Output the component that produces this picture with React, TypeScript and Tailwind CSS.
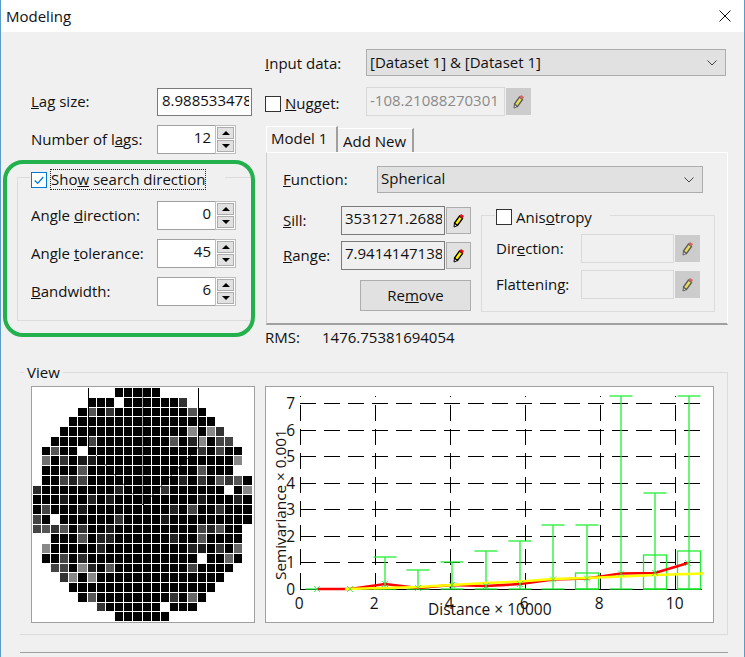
import { ReactNode } from 'react';

const font = 'font-["Open_Sans","Noto_Sans",sans-serif]';

// [first col, last col, overrides]
const wafer: [number, number, Record<number, string>][] = [
  [9, 13, {}],
  [6, 16, { 9: '#fff', 16: '#333' }],
  [5, 18, { 6: '#555', 8: '#333', 17: '#555' }],
  [4, 19, {}],
  [3, 20, { 17: '#888', 19: '#888', 20: '#333' }],
  [2, 21, { 6: '#444', 15: '#555', 17: '#222', 18: '#888', 20: '#444', 21: '#444' }],
  [1, 22, { 2: '#555', 5: '#fff', 18: '#333', 20: '#444' }],
  [1, 22, { 1: '#707070', 3: '#333', 5: '#1a1a1a', 6: '#1a1a1a', 22: '#888' }],
  [1, 21, { 5: '#555', 18: '#555' }],
  [1, 23, { 3: '#444', 4: '#222', 5: '#444', 16: '#222', 18: '#333', 20: '#555', 21: '#333', 22: '#555' }],
  [0, 23, { 0: '#2a2a2a', 9: '#222', 14: '#333', 21: '#fff', 23: '#888' }],
  [0, 23, { 3: '#1a1a1a', 6: '#222', 8: '#1a1a1a', 18: '#1a1a1a', 22: '#222' }],
  [0, 23, { 1: '#444', 5: '#1a1a1a', 15: '#222', 17: '#444', 20: '#333' }],
  [0, 23, { 0: '#444', 2: '#fff', 9: '#333', 14: '#1a1a1a' }],
  [0, 22, { 0: '#444', 1: '#555', 2: '#333', 3: '#555', 5: '#333', 8: '#1a1a1a', 18: '#444', 19: '#222', 20: '#555' }],
  [2, 22, { 5: '#555', 7: '#222', 8: '#222', 15: '#222', 18: '#555' }],
  [1, 22, { 1: '#888', 7: '#222', 17: '#222', 18: '#1a1a1a', 20: '#333', 22: '#666' }],
  [1, 22, { 3: '#444', 5: '#2a2a2a', 18: '#fff', 21: '#666' }],
  [2, 21, { 2: '#444', 3: '#444', 5: '#888', 6: '#222', 8: '#555', 17: '#444' }],
  [3, 20, { 3: '#333', 4: '#888', 6: '#888' }],
  [4, 19, {}],
  [5, 18, { 6: '#555', 15: '#333', 17: '#666' }],
  [7, 17, { 7: '#333', 14: '#fff' }],
  [9, 14, {}],
];

// x, top of whisker, top of box (if any)
const bins: [number, number, number?][] = [
  [317, 589], [350, 589], [385, 557], [418, 570], [452, 562], [486, 551],
  [520, 541], [553, 525], [587, 525, 573], [621, 396], [655, 493, 555], [689, 396, 551],
];

const redLine = '317,589 350,589 385,584 418,588 452,585 486,586 520,584 553,579.5 587,578.5 621,573.5 655,573 688,563';
const yellowLine = '345,589 385,588 418,587 452,585 486,583 520,581.5 553,579 587,578 621,576.5 655,575 704,573.5';

function Pencil({ off }: { off?: boolean }) {
  return (
    <svg viewBox="0 0 12 15" className={off ? 'w-[12px] h-[15px] opacity-55' : 'w-[12px] h-[15px]'}>
      <path d="M1 14 L1.5 10 L4.5 12.5 Z" fill="#fff" stroke="#000" strokeWidth="1" />
      <path d="M1.5 10 L6.5 3 L9.5 5.5 L4.5 12.5 Z" fill="#ffee00" stroke="#000" strokeWidth="1.3" />
      <path d="M6.5 3 L8 1 L11 3 L9.5 5.5 Z" fill="#e01010" />
    </svg>
  );
}

function PencilButton({ off }: { off?: boolean }) {
  return (
    <div className={off ? 'w-[25px] h-[27px] flex items-center justify-center bg-[#cccccc] border border-[#cccccc]' : 'w-[25px] h-[27px] flex items-center justify-center bg-[#e1e1e1] border border-[#adadad]'}>
      <Pencil off={off} />
    </div>
  );
}

function Check({ checked }: { checked?: boolean }) {
  return (
    <div className={checked ? 'w-4 h-4 shrink-0 bg-white border border-[#0078d7] flex items-center justify-center' : 'w-4 h-4 shrink-0 bg-white border border-[#333]'}>
      {checked && (
        <svg viewBox="0 0 14 14" className="w-3 h-3">
          <path d="M2 7.5 L5.5 11 L12 3.5" fill="none" stroke="#0078d7" strokeWidth="1.5" />
        </svg>
      )}
    </div>
  );
}

function Spin({ value }: { value: string }) {
  return (
    <div className="flex w-[79px] h-[29px]">
      <div className="w-[58px] bg-white border border-r-0 border-[#a0a0a0] text-right pr-[4px] leading-[23px]">{value}</div>
      <div className="w-[21px] flex flex-col gap-[1px] p-[1px] bg-white border border-[#bdbdbd]">
        <div className="flex-1 bg-[#e1e1e1] border border-[#adadad] flex items-center justify-center">
          <div className="w-0 h-0 border-x-[4px] border-x-transparent border-b-[4px] border-b-black" />
        </div>
        <div className="flex-1 bg-[#e1e1e1] border border-[#adadad] flex items-center justify-center">
          <div className="w-0 h-0 border-x-[4px] border-x-transparent border-t-[4px] border-t-black" />
        </div>
      </div>
    </div>
  );
}

function SpinRow({ label, value }: { label: ReactNode; value: string }) {
  return (
    <div className="flex items-center justify-between pl-[14px] w-[219px]">
      <span>{label}</span>
      <Spin value={value} />
    </div>
  );
}

function Select({ value, className }: { value: string; className: string }) {
  return (
    <div className={`h-[27px] bg-[#e1e1e1] border border-[#adadad] flex items-center justify-between pl-[3px] pr-[8px] ${className}`}>
      <span className="leading-none -mt-[2px]">{value}</span>
      <svg viewBox="0 0 10 6" className="w-[10px] h-[6px]">
        <path d="M0.5 0.5 L5 5 L9.5 0.5" fill="none" stroke="#444" strokeWidth="1" />
      </svg>
    </div>
  );
}

function Wafer() {
  return (
    <svg viewBox="0 0 222 235" className="w-[224px] h-[237px] bg-white border border-[#a0a0a0] shrink-0">
      <g shapeRendering="crispEdges">
        {wafer.map(([from, to, over], r) =>
          Array.from({ length: to - from + 1 }, (_, i) => from + i).map((c) => (
            <rect key={`${r}-${c}`} x={0.5 + c * 9.17} y={1 + r * 9.76} width={8.17} height={8.76} fill={over[c] ?? '#000'} />
          )),
        )}
      </g>
      <g fill="none" stroke="#000" strokeWidth="1">
        <path d="M56.5 1 V60" />
        <path d="M166.5 1 V60" />
      </g>
      <g fill="none" stroke="#000" strokeWidth="0.7">
        <path d="M56.5 60 L111 118 L166.5 60" />
        <path d="M111 1 V118" />
      </g>
    </svg>
  );
}

function Plot() {
  const ys = [403.7, 430.3, 456.3, 483.3, 509.5, 536, 562.5, 589.3];
  const xs = [300.3, 375.3, 450.3, 525.3, 600.3, 675.7];
  return (
    <svg viewBox="266 387 447 235" className="w-[449px] h-[237px] bg-white border border-[#a0a0a0] shrink-0">
      <g stroke="#000" strokeWidth="1" strokeDasharray="16 8" shapeRendering="crispEdges">
        {ys.slice(0, 7).map((y) => (
          <line key={y} x1="300" x2="702" y1={y} y2={y} />
        ))}
        <line x1="300" x2="702" y1="589.3" y2="589.3" strokeDasharray="none" />
        {xs.map((x) => (
          <line key={x} x1={x} x2={x} y1="589" y2="396" />
        ))}
      </g>
      <g stroke="#22ee33" strokeWidth="1.3" fill="none">
        {bins.map(([x, top, box]) => (
          <g key={x}>
            {top < 589 && <line x1={x - 11.5} x2={x + 11.5} y1={top} y2={top} />}
            {top < 589 && <line x1={x} x2={x} y1={top} y2={589} />}
            {box && <rect x={x - 11.5} y={box} width="23" height={589 - box} />}
            <line x1={x - 11.5} x2={x + 11.5} y1="589" y2="589" />
          </g>
        ))}
      </g>
      <polyline points={redLine} fill="none" stroke="#ff0000" strokeWidth="2.6" />
      <polyline points={yellowLine} fill="none" stroke="#ffff00" strokeWidth="2.4" />
      <g stroke="#33dd44" strokeWidth="0.8">
        {redLine.split(' ').map((p) => {
          const [x, y] = p.split(',').map(Number);
          return <path key={p} d={`M${x - 3} ${y - 3} L${x + 3} ${y + 3} M${x + 3} ${y - 3} L${x - 3} ${y + 3}`} />;
        })}
      </g>
      <g fontSize="15.5" fill="#111" fontFamily="'Open Sans','Noto Sans',sans-serif">
        {[7, 6, 5, 4, 3, 2, 1, 0].map((n, i) => (
          <text key={n} x="295" y={ys[i] + 5.5} textAnchor="end">{n}</text>
        ))}
        {[0, 2, 4, 6, 8, 10].map((n, i) => (
          <text key={n} x={xs[i] - 1} y="609" textAnchor="middle">{n}</text>
        ))}
        <text x="428" y="615">Distance × 10000</text>
        <text x="0" y="0" fontSize="15.3" transform="translate(286 580) rotate(-90)">Semivariance × 0.001</text>
      </g>
    </svg>
  );
}

export default function App() {
  return (
    <div className={`relative w-[745px] h-[657px] overflow-hidden bg-[#f0f0f0] border-x border-[#5b9bc8] text-[15px] text-[#111] ${font}`}>
      <div className="h-8 -mx-px bg-white flex items-center justify-between pl-[5px] pr-[14px]">
        <span className="pl-px">Modeling</span>
        <svg viewBox="0 0 12 12" className="w-3 h-3">
          <path d="M0.5 0.5 L11.5 11.5 M11.5 0.5 L0.5 11.5" stroke="#111" strokeWidth="1" />
        </svg>
      </div>

      <div className="flex h-[328px]">
        {/* left column */}
        <div className="ml-[16px] w-[248px] pt-[56px] flex flex-col">
          <div className="flex items-center justify-between pl-[14px] w-[235px]">
            <span className="-mt-[2px]"><u>L</u>ag size:</span>
            <div className="w-[95px] h-[28px] bg-white border border-[#7a7a7a] pl-[4px] pr-[2px]">
              <div className="overflow-hidden whitespace-nowrap leading-[23px]">8.98853347812</div>
            </div>
          </div>
          <div className="mt-[9px]">
            <SpinRow label={<>Number of l<u>a</u>gs:</>} value="12" />
          </div>
          <div className="mt-[23px] w-[234px] h-[144px] border border-[#dcdcdc] border-r-0 flex flex-col">
            <div className="-mt-[9px] ml-[12px] pl-px w-[195px] h-[21px] bg-[#f0f0f0] flex items-center gap-[3px]">
              <Check checked />
              <span className="border border-dotted border-[#222] leading-[19px] h-[21px] whitespace-nowrap">Sho<u>w</u> search direction</span>
            </div>
            <div className="mt-[11px] -ml-px flex flex-col gap-[9px]">
              <SpinRow label={<>Angle <u>d</u>irection:</>} value="0" />
              <SpinRow label={<>Angle <u>t</u>olerance:</>} value="45" />
              <SpinRow label={<><u>B</u>andwidth:</>} value="6" />
            </div>
          </div>
        </div>

        {/* right column */}
        <div className="w-[464px] pt-[17px] flex flex-col">
          <div className="flex items-center">
            <span className="w-[101px] pt-[2px]"><u>I</u>nput data:</span>
            <Select value="[Dataset 1] & [Dataset 1]" className="w-[360px] pt-px" />
          </div>
          <div className="mt-[11px] flex items-center h-[29px]">
            <div className="w-[101px] pt-[4px] flex items-center gap-[4px]">
              <Check />
              <span><u>N</u>ugget:</span>
            </div>
            <div className="w-[139px] h-[29px] border border-[#d9d9d9] bg-[#f0f0f0] text-[#8a8a8a] pl-[3px] overflow-hidden whitespace-nowrap leading-[24px]">-108.21088270301</div>
            <div className="ml-px"><PencilButton off /></div>
          </div>

          <div className="mt-[10px] flex items-end pl-px h-[26px]">
            <div className="w-[72px] h-[26px] bg-[#f0f0f0] border-t border-l border-white border-r-2 border-r-[#a0a0a0] pl-[4px] leading-[22px]">Model 1</div>
            <div className="w-[76px] h-[24px] border-t border-white border-r-2 border-r-[#a0a0a0] pl-[5px] leading-[24px]">Add New</div>
          </div>
          <div className="ml-px w-[462px] h-[173px] border border-white border-b-2 border-b-[#a0a0a0] border-l-[#d0d0d0] pt-[13px] pl-[16px]">
            <div className="flex items-center">
              <span className="w-[94px]"><u>F</u>unction:</span>
              <Select value="Spherical" className="w-[326px]" />
            </div>
            <div className="flex mt-[13px]">
              <div className="w-[188px] shrink-0 flex flex-col">
                <div className="flex items-center">
                  <span className="w-[58px]"><u>S</u>ill:</span>
                  <div className="w-[104px] h-[29px] border border-[#7a7a7a] pl-[3px] pr-[2px]">
                    <div className="overflow-hidden whitespace-nowrap leading-[23px]">3531271.26881</div>
                  </div>
                  <div className="ml-px"><PencilButton /></div>
                </div>
                <div className="flex items-center mt-[6px]">
                  <span className="w-[58px]"><u>R</u>ange:</span>
                  <div className="w-[104px] h-[29px] border border-[#7a7a7a] pl-[3px] pr-[2px]">
                    <div className="overflow-hidden whitespace-nowrap leading-[23px]">7.94141471381</div>
                  </div>
                  <div className="ml-px"><PencilButton /></div>
                </div>
                <div className="mt-[10px] ml-[77px] w-[111px] h-[31px] bg-[#e1e1e1] border border-[#adadad] flex items-center justify-center">Re<u>m</u>ove</div>
              </div>
              <div className="ml-[10px] mt-[9px] w-[234px] h-[97px] border border-[#dcdcdc] px-[14px]">
                <div className="-mt-[10px] w-[115px] -ml-px pl-px h-[22px] bg-[#f0f0f0] flex items-center gap-[4px]">
                  <Check />
                  <span>Anis<u>o</u>tropy</span>
                </div>
                <div className="mt-[6px] flex items-center">
                  <span className="w-[86px]">Dir<u>e</u>ction:</span>
                  <div className="w-[95px] h-[29px] border border-[#d9d9d9]" />
                  <div className="ml-px"><PencilButton off /></div>
                </div>
                <div className="mt-[7px] flex items-center">
                  <span className="w-[86px]">Flattenin<u>g</u>:</span>
                  <div className="w-[95px] h-[29px] border border-[#d9d9d9]" />
                  <div className="ml-px"><PencilButton off /></div>
                </div>
              </div>
            </div>
          </div>
          <div className="mt-px flex">
            <span className="w-[57px]">RMS:</span>
            <span>1476.75381694054</span>
          </div>
        </div>
      </div>

      {/* view group */}
      <div className="ml-[19px] mt-[12px] w-[708px] h-[263px] border border-[#dcdcdc] border-l-0 flex flex-col relative">
        <div className="absolute left-[4px] -top-[12px] bg-[#f0f0f0] px-[3px] leading-[22px]">View</div>
        <div className="mt-[13px] ml-[11px] flex gap-[10px]">
          <Wafer />
          <Plot />
        </div>
      </div>
      <div className="ml-[19px] mt-[17px] w-[708px] h-px bg-[#a0a0a0]" />

      {/* green annotation drawn over the shot */}
      <div className="absolute left-[2px] top-[160px] w-[252px] h-[177px] border-[4px] border-[#22b14c] rounded-[20px]" />
    </div>
  );
}
